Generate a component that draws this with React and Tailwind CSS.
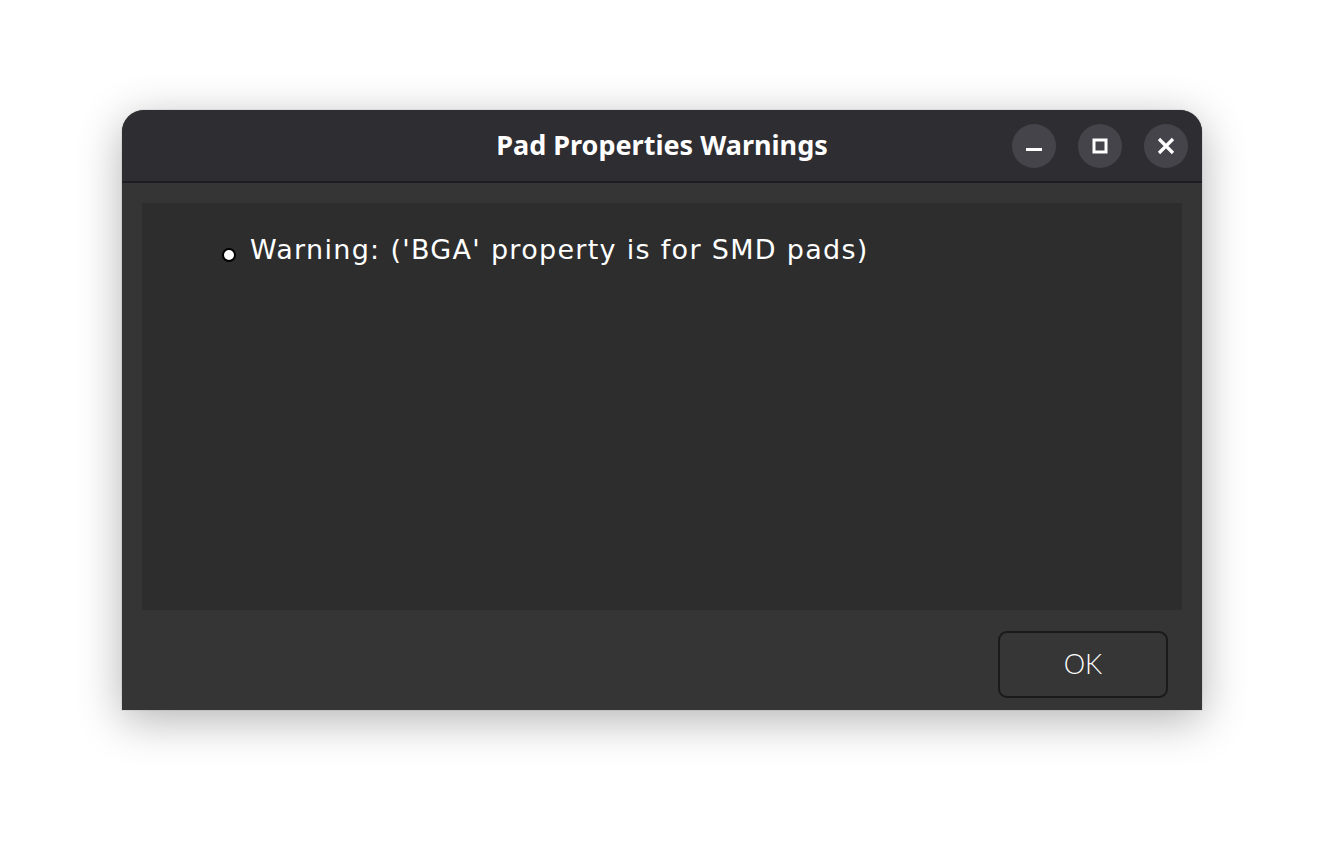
import React from "react";

function WinButton({ children }) {
  return (
    <button className="flex h-[44px] w-[44px] items-center justify-center rounded-full bg-[#45444a] text-white">
      {children}
    </button>
  );
}

export default function App() {
  return (
    <div className="flex h-[844px] w-[1324px] items-start justify-center bg-white pt-[110px]">
      <div className="flex h-[600px] w-[1080px] flex-col overflow-hidden rounded-t-[22px] bg-[#353535] shadow-[0_10px_45px_rgba(0,0,0,0.3),0_0_0_1px_rgba(0,0,0,0.06)]">
        {/* header bar */}
        <div className="relative flex h-[73px] shrink-0 items-center justify-center border-b-2 border-[#1e1e22] bg-[#2e2d32]">
          <span className="font-[family-name:'Noto_Sans',sans-serif] text-[27px] font-bold text-white">
            Pad Properties Warnings
          </span>
          <div className="absolute right-[14px] top-[14px] flex gap-[22px]">
            <WinButton>
              <svg width="16" height="16" viewBox="0 0 16 16">
                <rect x="0" y="10" width="16" height="3" fill="white" />
              </svg>
            </WinButton>
            <WinButton>
              <svg width="16" height="16" viewBox="0 0 16 16">
                <rect x="2" y="2" width="12" height="12" fill="none" stroke="white" strokeWidth="3" />
              </svg>
            </WinButton>
            <WinButton>
              <svg width="18" height="18" viewBox="0 0 18 18">
                <path d="M2 2 L16 16 M16 2 L2 16" stroke="white" strokeWidth="3.2" />
              </svg>
            </WinButton>
          </div>
        </div>

        {/* body */}
        <div className="flex flex-1 flex-col px-[20px] pt-[20px]">
          <div className="h-[407px] bg-[#2d2d2d] pl-[80px] pt-[27px]">
            <div className="flex items-center gap-[14px] font-[family-name:'DejaVu_Sans',sans-serif] text-[27px] tracking-[1.3px] text-white">
              <span className="mt-[10px] h-[14px] w-[14px] rounded-full border-2 border-black bg-white" />
              <span>Warning: ('BGA' property is for SMD pads)</span>
            </div>
          </div>
          <div className="flex flex-1 items-start justify-end pr-[14px] pt-[21px]">
            <button className="flex h-[67px] w-[170px] items-center justify-center rounded-[9px] border-2 border-[#1a1a1a] bg-[#363636] font-[family-name:'Lato',sans-serif] text-[27px] font-light text-white">
              OK
            </button>
          </div>
        </div>
      </div>
    </div>
  );
}
